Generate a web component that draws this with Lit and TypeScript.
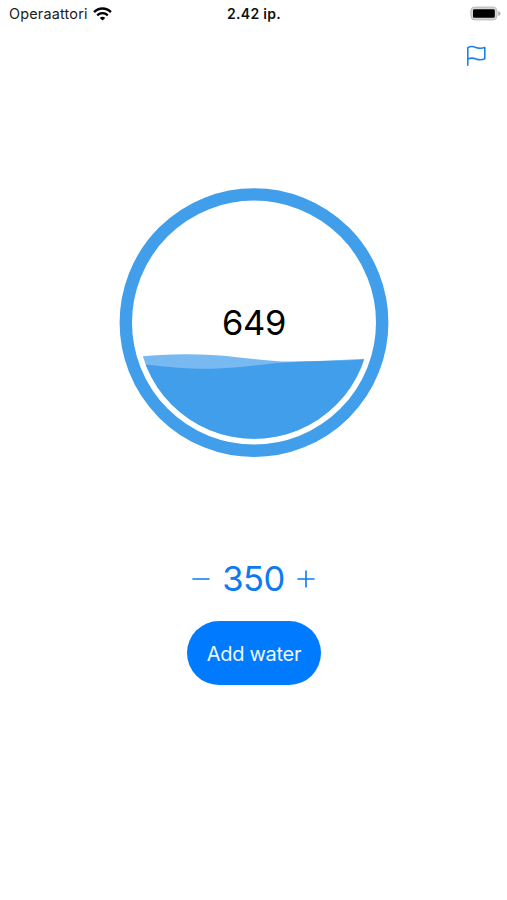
import { LitElement, html, css } from "lit";
import { customElement, property, state } from "lit/decorators.js";

@customElement("status-bar")
class StatusBar extends LitElement {
  static styles = css`
    :host { display: block; }
    .bar {
      display: grid;
      grid-template-columns: 1fr auto 1fr;
      align-items: center;
      height: 28px;
      padding: 0 6px 0 9px;
      color: #1c1c1c;
      font-size: 14.4px;
      line-height: 28px;
    }
    .carrier { display: flex; align-items: center; gap: 5px; }
    .name { letter-spacing: 0.2px; }
    .time { font-weight: 600; color: #111; font-size: 14px; letter-spacing: 0.3px; margin-right: 2px; }
    .battery { justify-self: end; display: block; }
    .wifi { display: block; margin-top: -1px; }
  `;
  render() {
    return html`<div class="bar">
      <div class="carrier">
        <span class="name">Operaattori</span>
        <svg class="wifi" width="19" height="14" viewBox="0 0 19 14" fill="none" stroke="#000">
          <path d="M1.1 5.1C5.8 .4 13.2 .4 17.9 5.1" stroke-width="2.5" />
          <path d="M4.2 8.3C7.2 5.5 11.8 5.5 14.8 8.3" stroke-width="2.3" />
          <path d="M9.5 13.6L6.8 10.9C8.3 9.5 10.7 9.5 12.2 10.9Z" fill="#000" stroke="none" />
        </svg>
      </div>
      <span class="time">2.42 ip.</span>
      <svg class="battery" width="31" height="16" viewBox="0 0 31 16">
        <rect x=".9" y="1.1" width="26" height="12.8" rx="4" fill="#d6d6d6" stroke="#b8b8b8" />
        <rect x="3" y="3.2" width="21.8" height="8.6" rx="1.2" fill="#000" />
        <path d="M28.1 5.1Q30.6 6 30.6 7.6T28.1 10.1Z" fill="#b0b0b0" />
      </svg>
    </div>`;
  }
}

@customElement("water-gauge")
class WaterGauge extends LitElement {
  @property({ type: Number }) amount = 0;
  static styles = css`
    :host { display: block; }
    .gauge { display: grid; place-items: center; width: 270px; height: 270px; }
    .dial, .amount { grid-area: 1 / 1; }
    .dial { display: block; }
    .amount { color: #000; font-size: 34.5px; line-height: 40px; letter-spacing: -0.3px; }
  `;
  render() {
    return html`<div class="gauge">
      <svg class="dial" width="270" height="270" viewBox="0 0 270 270">
        <defs><clipPath id="bowl"><circle cx="135" cy="134.6" r="116.2" /></clipPath></defs>
        <circle cx="135" cy="134.6" r="128.2" fill="none" stroke="#409eeb" stroke-width="12.4" />
        <g clip-path="url(#bowl)">
          <path d="M18 168.8C42 166.2 69 165.4 97 167.2C126 169.2 148 173.6 172 173.6C198 173 226 171.8 254 170.3V260H18Z" fill="#78b9f1" />
          <path d="M18 175.2C42 178.4 66 180.9 92 180.8C124 180.2 148 174.6 176 173.9C204 173.1 226 173 254 171.2V260H18Z" fill="#409eeb" />
        </g>
      </svg>
      <span class="amount">${this.amount}</span>
    </div>`;
  }
}

@customElement("app-root")
class AppRoot extends LitElement {
  @state() private total = 649;
  @state() private portion = 350;

  static styles = css`
    :host {
      display: block;
      height: 900px;
      background: #fff;
      font-family: Inter, "Liberation Sans", sans-serif;
    }
    .screen { display: flex; flex-direction: column; align-items: center; }
    .status { width: 100%; }
    .toolbar {
      display: flex;
      justify-content: flex-end;
      box-sizing: border-box;
      width: 100%;
      height: 160px;
      padding: 16px 19px 0 0;
    }
    button { appearance: none; border: 0; margin: 0; padding: 0; background: none; font: inherit; color: #0c7bf0; }
    .icon { display: block; }
    .goal { width: 22px; height: 24px; }
    .meter { margin-left: 1px; }
    .stepper { display: flex; align-items: center; gap: 12px; height: 40px; margin-top: 101px; }
    .portion { color: #0c7bf0; font-size: 34.5px; line-height: 40px; letter-spacing: -0.5px; }
    .add {
      width: 134px;
      height: 64px;
      margin: 22px 0 0 1px;
      padding-top: 1px;
      border-radius: 32px;
      background: #007aff;
      color: #eef6ff;
      font-size: 20px;
      letter-spacing: -0.3px;
    }
  `;

  private change(by: number) {
    this.portion = Math.max(0, this.portion + by);
  }

  render() {
    return html`<main class="screen">
      <status-bar class="status"></status-bar>
      <div class="toolbar">
        <button class="goal" aria-label="Goal">
          <svg class="icon" width="22" height="24" viewBox="0 0 22 24" fill="none" stroke="#1b82ed" stroke-width="1.6" stroke-linecap="round" stroke-linejoin="round">
            <path d="M1.8 21.2V3.6C4.2 2.2 7.2 2.3 10 3.4C13 4.4 16 4.5 18.8 3.5V14.8C16 16 13 16 10 14.9C7.2 13.9 4.2 13.9 1.8 15" />
          </svg>
        </button>
      </div>
      <water-gauge class="meter" .amount=${this.total}></water-gauge>
      <div class="stepper">
        <button aria-label="Less" @click=${() => this.change(-50)}>
          <svg class="icon" width="18" height="18" viewBox="0 0 18 18" stroke="#0c7bf0" stroke-width="1.6" stroke-linecap="round"><path d="M1 9H17" /></svg>
        </button>
        <span class="portion">${this.portion}</span>
        <button aria-label="More" @click=${() => this.change(50)}>
          <svg class="icon" width="18" height="18" viewBox="0 0 18 18" stroke="#0c7bf0" stroke-width="1.6" stroke-linecap="round"><path d="M1 9H17M9 1V17" /></svg>
        </button>
      </div>
      <button class="add" @click=${() => (this.total += this.portion)}>Add water</button>
    </main>`;
  }
}
